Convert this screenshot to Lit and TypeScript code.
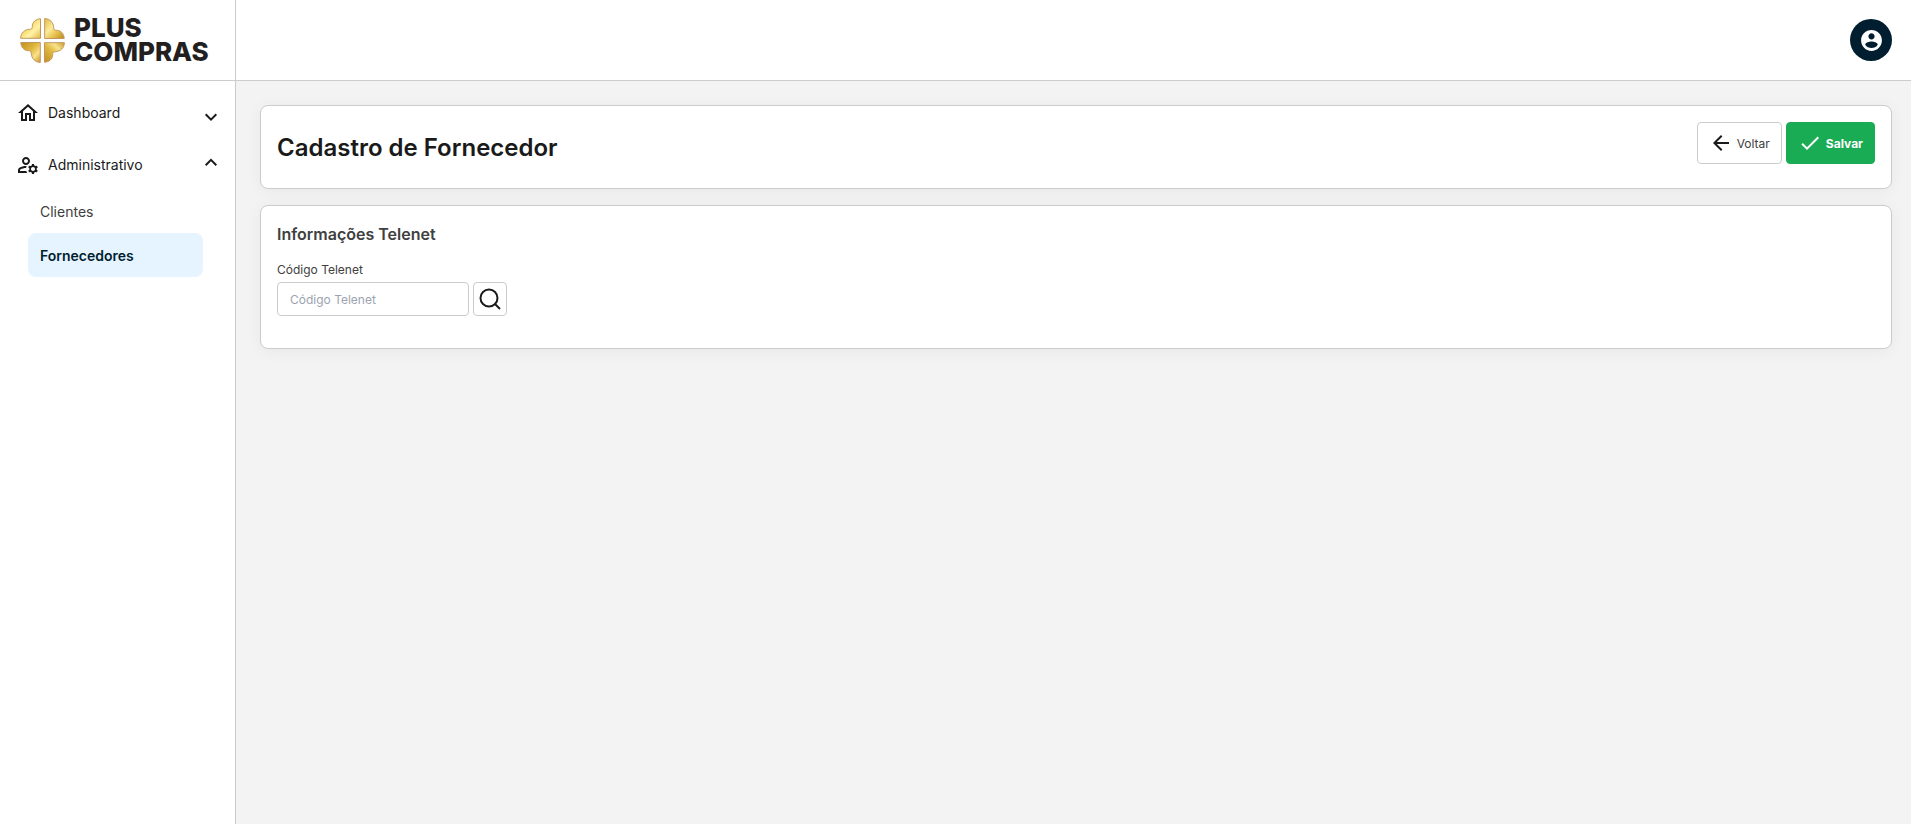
import { LitElement, html, css, svg } from "lit";
import { customElement, state } from "lit/decorators.js";

const petal = (rotation: number, fill: string) => svg`
  <path transform="rotate(${rotation} 22.5 22.5)" fill="url(#${fill})" stroke="#c4965f" stroke-width="1"
    d="M20.500 .800V20.300H.600C.800 15 4.500 11.600 9.500 11.300C11.600 11.200 12.600 10.500 12.300 8.300C12.300 4 16 1 20.500 .800Z"/>`;

@customElement("app-root")
export class AppRoot extends LitElement {
  @state() private dashboardOpen = false;
  @state() private adminOpen = true;

  static styles = css`
    :host {
      display: grid;
      grid-template-columns: 236px 1fr;
      grid-template-rows: 81px 1fr;
      min-height: 100vh;
      background: #f3f3f3;
      color: #1a1a1a;
      font-family: Inter, "Liberation Sans", sans-serif;
      font-size: 14px;
    }
    *, *::before, *::after { box-sizing: border-box; }
    a { color: inherit; text-decoration: none; }
    button, input { font: inherit; color: inherit; }
    button { cursor: pointer; }
    svg { display: block; flex: none; }
    .brand {
      display: flex;
      align-items: center;
      gap: 9px;
      padding: 0 20px;
      background: #fff;
      border-right: 1px solid #ccc;
      border-bottom: 1px solid #ccc;
    }
    .brand-name {
      color: #231f20;
      font-size: 26px;
      font-weight: 800;
      line-height: 24px;
    }
    .topbar {
      display: flex;
      align-items: center;
      justify-content: flex-end;
      padding: 0 19px;
      background: #fff;
      border-bottom: 1px solid #ccc;
    }
    .avatar {
      display: grid;
      place-items: center;
      width: 42px;
      height: 42px;
      padding: 0;
      border: 0;
      border-radius: 50%;
      background: #001e2f;
      color: #fff;
    }
    .sidebar {
      display: flex;
      flex-direction: column;
      gap: 4px;
      padding: 8px 12px 0 16px;
      background: #fff;
      border-right: 1px solid #ccc;
    }
    .group {
      display: flex;
      align-items: center;
      gap: 8px;
      width: 100%;
      height: 48px;
      padding: 0;
      border: 0;
      background: none;
      text-align: left;
    }
    .group-label { flex: 1; padding-bottom: 2px; }
    .submenu {
      margin: -4px 0 0;
      padding: 0 20px 0 12px;
      list-style: none;
    }
    .link {
      display: flex;
      align-items: center;
      height: 44px;
      padding: 0 12px;
      border-radius: 8px;
      color: #404040;
    }
    .link.active {
      background: #e6f4ff;
      color: #001e2f;
      font-weight: 600;
    }
    .content {
      display: flex;
      flex-direction: column;
      gap: 16px;
      padding: 24px 19px 24px 24px;
    }
    .card {
      padding: 16px;
      background: #fff;
      border: 1px solid #ccc;
      border-radius: 8px;
      box-shadow: 0 2px 16px rgba(0, 0, 0, 0.05);
    }
    .heading {
      display: flex;
      justify-content: space-between;
      align-items: flex-start;
      padding-bottom: 24px;
    }
    .title {
      margin: 10px 0 0;
      font-size: 24px;
      font-weight: 600;
      line-height: 32px;
    }
    .actions { display: flex; gap: 4px; }
    .button {
      display: flex;
      align-items: center;
      gap: 4px;
      height: 42px;
      padding: 0 11px;
      border: 1px solid #ccc;
      border-radius: 4px;
      background: #fff;
      color: #404040;
      font-size: 12px;
    }
    .button.primary {
      border-color: #1aab55;
      background: #1aab55;
      color: #fff;
      font-weight: 700;
    }
    .button .icon { color: #1a1a1a; }
    .button.primary .icon { color: #fff; }
    .subtitle {
      margin: 0 0 16px;
      color: #404040;
      font-size: 16px;
      font-weight: 600;
      line-height: 24px;
    }
    .label {
      display: block;
      margin-bottom: 4px;
      color: #404040;
      font-size: 12px;
      line-height: 16px;
    }
    .search { display: flex; gap: 4px; padding-bottom: 16px; }
    .field {
      width: 192px;
      height: 34px;
      padding: 0 12px;
      border: 1px solid #ccc;
      border-radius: 4px;
      background: #fff;
      font-size: 12px;
    }
    .field::placeholder { color: #9ca3af; opacity: 1; }
    .search-button {
      display: grid;
      place-items: center;
      width: 34px;
      height: 34px;
      padding: 0;
      border: 1px solid #ccc;
      border-radius: 4px;
      background: #fff;
    }
  `;

  private chevron(open: boolean) {
    return html`<svg width="24" height="24" viewBox="0 0 24 24" fill="none" stroke="currentColor" stroke-width="2" aria-hidden="true">
      <path d=${open ? "M6.700 12.200 12 6.900l5.300 5.300" : "M6.700 13.300 12 18.600l5.300-5.300"} />
    </svg>`;
  }

  render() {
    return html`
      <a class="brand" href="#" aria-label="Plus Compras">
        <svg width="45" height="45" viewBox="0 0 45 45" aria-hidden="true">
          <defs>
            <linearGradient id="light" x1="0" y1="0" x2="1" y2="1">
              <stop offset="0" stop-color="#d9a520" /><stop offset=".35" stop-color="#f6d75e" />
              <stop offset=".65" stop-color="#fff2a8" /><stop offset="1" stop-color="#e0b840" />
            </linearGradient>
            <linearGradient id="right" x1="0" y1="1" x2="1" y2="0">
              <stop offset="0" stop-color="#e3bd45" /><stop offset=".4" stop-color="#fbeb9c" />
              <stop offset=".65" stop-color="#e8c450" /><stop offset="1" stop-color="#b98a1e" />
            </linearGradient>
            <linearGradient id="deep" x1="1" y1="0" x2="0" y2="1">
              <stop offset="0" stop-color="#c08f20" /><stop offset=".45" stop-color="#e0b840" />
              <stop offset=".7" stop-color="#f8e28a" /><stop offset="1" stop-color="#c99a2c" />
            </linearGradient>
          </defs>
          ${petal(0, "light")}${petal(90, "right")}${petal(180, "deep")}${petal(270, "deep")}
        </svg>
        <span class="brand-name">PLUS<br />COMPRAS</span>
      </a>
      <header class="topbar">
        <button class="avatar" aria-label="Conta">
          <svg width="25" height="25" viewBox="0 0 24 24" fill="currentColor" aria-hidden="true">
            <path d="M12 2C6.480 2 2 6.480 2 12s4.480 10 10 10 10-4.480 10-10S17.520 2 12 2zm0 3c1.660 0 3 1.340 3 3s-1.340 3-3 3-3-1.340-3-3 1.340-3 3-3zm0 14.200c-2.500 0-4.710-1.280-6-3.220.030-1.990 4-3.080 6-3.080 1.990 0 5.970 1.090 6 3.080-1.290 1.940-3.500 3.220-6 3.220z" />
          </svg>
        </button>
      </header>
      <nav class="sidebar">
        <button class="group" aria-expanded=${this.dashboardOpen} @click=${() => (this.dashboardOpen = !this.dashboardOpen)}>
          <svg width="24" height="24" viewBox="0 0 24 24" fill="currentColor" aria-hidden="true">
            <path d="M12 5.690l5 4.500V18h-2v-6H9v6H7v-7.810l5-4.500M12 3L2 12h3v8h6v-6h2v6h6v-8h3L12 3z" />
          </svg>
          <span class="group-label">Dashboard</span>
          ${this.chevron(this.dashboardOpen)}
        </button>
        <button class="group" aria-expanded=${this.adminOpen} @click=${() => (this.adminOpen = !this.adminOpen)}>
          <svg width="24" height="24" viewBox="0 0 24 24" fill="currentColor" aria-hidden="true">
            <path d="M4 18v-.650c0-.340.160-.660.410-.810C6.100 15.530 8.030 15 10 15c.030 0 .050 0 .080.010.100-.700.300-1.370.590-1.980-.220-.020-.440-.030-.670-.030-2.420 0-4.680.670-6.610 1.820-.880.520-1.390 1.500-1.390 2.530V20h9.260c-.420-.600-.750-1.280-.970-2H4zM10 12c2.210 0 4-1.790 4-4s-1.790-4-4-4-4 1.790-4 4 1.790 4 4 4zm0-6c1.100 0 2 .900 2 2s-.900 2-2 2-2-.900-2-2 .900-2 2-2zM20.750 16c0-.220-.030-.420-.060-.630l1.140-1.010-1-1.730-1.450.490c-.320-.270-.680-.480-1.080-.630L18 11h-2l-.300 1.490c-.400.150-.760.360-1.080.630l-1.450-.490-1 1.730 1.140 1.010c-.030.210-.060.410-.060.630s.030.420.060.630l-1.140 1.010 1 1.730 1.450-.490c.320.270.680.480 1.080.630L16 21h2l.300-1.490c.400-.150.760-.360 1.080-.630l1.450.490 1-1.730-1.140-1.010c.030-.210.060-.410.060-.630zM17 18c-1.100 0-2-.900-2-2s.900-2 2-2 2 .900 2 2-.900 2-2 2z" />
          </svg>
          <span class="group-label">Administrativo</span>
          ${this.chevron(this.adminOpen)}
        </button>
        ${this.adminOpen
          ? html`<ul class="submenu">
              <li><a class="link" href="#clientes">Clientes</a></li>
              <li><a class="link active" href="#fornecedores" aria-current="page">Fornecedores</a></li>
            </ul>`
          : null}
      </nav>
      <main class="content">
        <section class="card heading">
          <h1 class="title">Cadastro de Fornecedor</h1>
          <div class="actions">
            <button class="button">
              <svg class="icon" width="24" height="24" viewBox="0 0 24 24" fill="currentColor" aria-hidden="true">
                <path d="M20 11H7.830l5.590-5.590L12 4l-8 8 8 8 1.410-1.410L7.830 13H20v-2z" />
              </svg>
              Voltar
            </button>
            <button class="button primary">
              <svg class="icon" width="24" height="24" viewBox="0 0 24 24" fill="currentColor" aria-hidden="true">
                <path d="M9 16.170L4.830 12l-1.420 1.410L9 19 21 7l-1.410-1.410z" />
              </svg>
              Salvar
            </button>
          </div>
        </section>
        <section class="card">
          <h2 class="subtitle">Informações Telenet</h2>
          <label class="label" for="codigo">Código Telenet</label>
          <div class="search">
            <input class="field" id="codigo" type="text" placeholder="Código Telenet" />
            <button class="search-button" aria-label="Buscar">
              <svg width="24" height="24" viewBox="0 0 24 24" fill="none" stroke="currentColor" stroke-width="2" aria-hidden="true">
                <circle cx="11" cy="11" r="8.500" /><path d="M17 17l5 5" />
              </svg>
            </button>
          </div>
        </section>
      </main>
    `;
  }
}
